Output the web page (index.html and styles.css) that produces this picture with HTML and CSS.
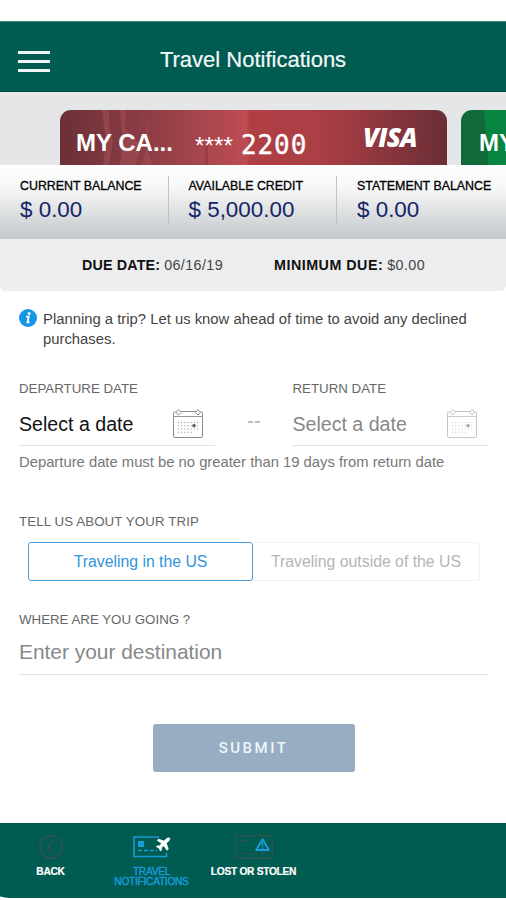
FILE: index.html
```html
<!DOCTYPE html>
<html lang="en">
<head>
<meta charset="utf-8">
<title>Travel Notifications</title>
<link rel="stylesheet" href="styles.css">
</head>
<body>
<div class="app">
  <header class="header">
    <div class="menu"><i></i><i></i><i></i></div>
    <h1 class="title">Travel Notifications</h1>
  </header>

  <section class="cards">
    <div class="card card-red">
      <svg class="card-art" viewBox="0 0 387 54" preserveAspectRatio="none">
        <path d="M42 0H49V14L53 31L49 54H43L46 32Z M60 0H66L65 18L81 35L75 54H60L63 31Z M87 14H88V40L92 54H82L86 40Z" fill="#b65c64" opacity=".35"/>
        <path d="M145 54V37L148 35V54Z" fill="#86353d" opacity=".5"/>
      </svg>
      <span class="card-name">MY CA...</span>
      <span class="card-mask">****</span>
      <span class="card-num">2200</span>
      <span class="card-brand">VISA</span>
    </div>
    <div class="card card-green"><span class="card-name">MY</span></div>
  </section>

  <section class="balances">
    <div class="balance"><span class="balance-label">CURRENT BALANCE</span><span class="amount">$ 0.00</span></div>
    <div class="balance"><span class="balance-label">AVAILABLE CREDIT</span><span class="amount">$ 5,000.00</span></div>
    <div class="balance"><span class="balance-label">STATEMENT BALANCE</span><span class="amount">$ 0.00</span></div>
  </section>

  <section class="due">
    <div class="due-item"><b>DUE DATE:</b> <span>06/16/19</span></div>
    <div class="due-item minimum"><b>MINIMUM DUE:</b> <span>$0.00</span></div>
  </section>

  <main class="form">
    <div class="info">
      <svg class="info-icon" viewBox="0 0 18 18"><circle cx="9" cy="9" r="9" fill="#1595e6"/><circle cx="10.1" cy="4.6" r="1.5" fill="#fff"/><path d="M7 7.6H9.700L8.500 13.200H10.500" fill="none" stroke="#fff" stroke-width="1.9"/></svg>
      <p>Planning a trip? Let us know ahead of time to avoid any declined<br>purchases.</p>
    </div>

    <div class="dates">
      <div class="date">
        <label class="label">DEPARTURE DATE</label>
        <div class="date-row">
          <span>Select a date</span>
          <svg class="calendar" viewBox="0 0 32 32" fill="none" stroke="#8d8d8d"><path d="M4.500 4H2.500Q1.500 4 1.500 5.500V28Q1.500 29.500 3 29.500H29Q30.500 29.500 30.500 28V5.500Q30.500 4 29.500 4H28M9 3.500H24"/><path d="M1.500 8.500H30.500" stroke-width=".9"/><path d="M4 4.500L6.700 1.500L9 4.500L6.700 7ZM23.500 4.500L26 1.500L28.500 4.500L26 7Z"/><path d="M6 14.500H28M6 17.700H28M6 21H28M6 24.300H20" stroke-dasharray="1 2.200" stroke-width="1"/><path d="M20.500 17.700H23.500" stroke="#555" stroke-width="3"/></svg>
        </div>
      </div>
      <span class="dash"><i></i><i></i></span>
      <div class="date muted">
        <label class="label">RETURN DATE</label>
        <div class="date-row">
          <span>Select a date</span>
          <svg class="calendar" viewBox="0 0 32 32" fill="none" stroke="#c5c5c5"><path d="M4.500 4H2.500Q1.500 4 1.500 5.500V28Q1.500 29.500 3 29.500H29Q30.500 29.500 30.500 28V5.500Q30.500 4 29.500 4H28M9 3.500H24"/><path d="M1.500 8.500H30.500" stroke-width=".9"/><path d="M4 4.500L6.700 1.500L9 4.500L6.700 7ZM23.500 4.500L26 1.500L28.500 4.500L26 7Z"/><path d="M6 14.500H28M6 17.700H28M6 21H28M6 24.300H20" stroke-dasharray="1 2.200" stroke-width="1"/><path d="M20.500 17.700H23.500" stroke="#a5a5a5" stroke-width="3"/></svg>
        </div>
      </div>
    </div>
    <p class="hint">Departure date must be no greater than 19 days from return date</p>

    <label class="label trip-label">TELL US ABOUT YOUR TRIP</label>
    <div class="segments">
      <div class="segment active">Traveling in the US</div>
      <div class="segment">Traveling outside of the US</div>
    </div>

    <label class="label where-label">WHERE ARE YOU GOING ?</label>
    <div class="destination">Enter your destination</div>

    <button class="submit">SUBMIT</button>
  </main>

  <nav class="tabs">
    <div class="tab back">
      <svg width="24" height="24" viewBox="0 0 24 24" fill="none" stroke="#3c4f4c" stroke-width="1.300"><circle cx="12" cy="12" r="11.300"/><path d="M14 6.500L9 12L14 17.500"/></svg>
      <span>BACK</span>
    </div>
    <div class="tab travel">
      <svg width="38" height="24" viewBox="0 0 38 24"><path d="M26 2H1V21.500H33.500V18" fill="none" stroke="#1b9bd7" stroke-width="1.600"/><path d="M5 6H11V12H5Z" fill="#1b9bd7"/><path d="M5 15.500H24" stroke="#1b9bd7" stroke-width="1.600" stroke-dasharray="4 2"/><path d="M36.800 3.200Q35.200 2 33.300 3.800L31 6L25.500 4L24.300 5.400L28.600 8.500L26.200 11L24.200 10.700L23.300 11.800L26 13.200L27.400 16L28.700 15L28.400 13L30.800 10.700L34 15.400L35.300 14L33.400 8.300L35.700 6Q37.500 4.300 36.800 3.200Z" fill="#fff" stroke="#fff" stroke-width=".6"/></svg>
      <span>TRAVEL<br>NOTIFICATIONS</span>
    </div>
    <div class="tab lost">
      <svg width="38" height="24" viewBox="0 0 38 24" fill="none" stroke="#3c4f4c" stroke-width="1.200"><rect x=".7" y=".7" width="36.500" height="22.500" rx="2"/><path d="M4 5.500H14M4 10H8M4 18.500H32" stroke-dasharray="5 2"/><path d="M27.500 4.200L33.800 15H21.200Z" stroke="#1b9bd7" stroke-width="2" stroke-linejoin="round"/><path d="M27.500 7.500V11.500M27.500 12.300V14" stroke="#1b9bd7" stroke-width="1.500"/></svg>
      <span>LOST OR STOLEN</span>
    </div>
  </nav>
</div>
</body>
</html>
```
FILE: styles.css
```css
* { box-sizing: border-box; }
body { margin: 0; background: #fff; font-family: "Liberation Sans", Arial, sans-serif; color: #000; }
h1, p { margin: 0; font-weight: 400; }
.app { display: flex; flex-direction: column; width: 506px; height: 900px; padding-top: 21px; overflow: hidden; white-space: nowrap; }

.header { display: grid; grid-template-columns: 50px 1fr 50px; height: 71px; flex: none; padding-top: 5px; align-items: center; background: #005b50; border-top: 1px solid #3d8f83; border-bottom: 1px solid #004b40; }
.menu { display: flex; flex-direction: column; gap: 6px; padding: 5px 0 0 18px; }
.menu i { height: 3px; background: #f0f4f3; }
.title { padding-top: 2px; font-size: 22px; line-height: 26px; text-align: center; color: #f4f8f7; -webkit-text-stroke: .2px #f4f8f7; }

.cards { display: flex; flex: none; gap: 14px; height: 73px; padding: 18px 0 0 60px; background: #e5e6e8; overflow: hidden; }
.card { position: relative; flex: none; display: flex; height: 55px; padding-left: 16px; border-radius: 11px 11px 0 0; color: #fff; }
.card-red { width: 387px; background: linear-gradient(90deg, #6c3036, #8d3d45 22%, #bd4c53 48%, #b03e45 49%, #ab3e45 68%, #6b2e35); }
.card-green { width: 200px; padding-left: 18px; background: linear-gradient(85deg, #12693a 0 27px, #068440 28px); }
.card-art { position: absolute; inset: 0; width: 100%; height: 100%; }
.card span { position: relative; line-height: 28px; }
.card-name { width: 119px; padding-top: 19px; font-size: 24px; font-weight: 700; }
.card-green .card-name { width: auto; }
.card-mask { width: 46px; padding-top: 22px; font-size: 24px; letter-spacing: .2px; }
.card-num { width: 122px; padding-top: 21px; font-family: "DejaVu Sans Mono", monospace; font-size: 26px; letter-spacing: .9px; -webkit-text-stroke: .4px #fff; }
.card-brand { padding-top: 13px; font-family: "Open Sans", sans-serif; font-size: 26px; font-weight: 800; font-style: italic; letter-spacing: -.8px; }

.balances { display: flex; flex: none; height: 74px; padding-top: 11px; background: linear-gradient(#fff, #f5f6f7 32%, #c4c8ca); }
.balance { display: flex; flex-direction: column; width: 168.500px; height: 49px; padding-left: 20px; border-right: 1px solid #bfc3c6; }
.balance:last-child { border: 0; }
.balance-label { height: 21px; font-size: 12.400px; line-height: 21px; -webkit-text-stroke: .3px #000; }
.amount { font-size: 22.400px; line-height: 26px; color: #132566; }

.due { display: flex; flex: none; height: 52px; padding-left: 82px; background: #ecedef; font-size: 14.300px; line-height: 52px; border-radius: 0 0 6px 6px; }
.due-item { width: 192px; }
.due-item b { letter-spacing: .15px; color: #111; }
.due-item span { letter-spacing: .4px; color: #444; }
.due-item.minimum b { letter-spacing: .5px; }

.form { display: flex; flex: 1; flex-direction: column; padding: 18px 18px 0 19px; color: #777; }
.info { display: flex; height: 70.500px; font-size: 14.830px; line-height: 20px; color: #444; }
.info-icon { width: 18px; height: 18px; margin-right: 6px; }
.label { display: block; height: 18px; font-size: 13.300px; line-height: 18px; color: #666; }
.dates { display: flex; height: 66.500px; }
.date { width: 196px; border-bottom: 1px solid #e2e2e2; }
.date-row { display: flex; justify-content: space-between; align-items: center; height: 47px; padding: 6px 11px 0 0; font-size: 19.600px; color: #111; }
.muted .date-row { padding-right: 10px; color: #888; }
.calendar { width: 32px; height: 32px; margin-top: -1px; }
.dash { display: flex; gap: 2px; width: 78px; padding: 41.500px 0 0 33px; }
.dash i { width: 5px; height: 2px; background: #bbb; }
.hint { padding-top: 6px; font-size: 14.800px; line-height: 20px; }
.trip-label { margin-top: 41px; letter-spacing: .1px; }
.segments { display: flex; height: 39px; margin: 11px 8px 0 9px; font-size: 15.800px; line-height: 37px; text-align: center; }
.segment { flex: 1; border: 1px solid #f2f2f2; border-left: 0; border-radius: 0 3px 3px 0; color: #b5b5b5; }
.segment.active { flex: none; width: 225px; border: 1px solid #4b9fdb; border-radius: 3px; color: #3295da; }
.where-label { margin-top: 30px; }
.destination { height: 46px; border-bottom: 1px solid #e2e2e2; font-size: 20.900px; line-height: 45px; color: #888; }
.submit { align-self: center; width: 202px; height: 48px; margin-top: 49px; padding: 0; border: 0; border-radius: 3px; background: #98adc2; font: 500 15px/48px Roboto, sans-serif; letter-spacing: 2.500px; color: #edf6fd; }

.tabs { display: flex; flex: none; height: 75px; margin-bottom: 2px; background: #005b50; border-bottom-left-radius: 16px 2px; color: #fff; }
.tab { display: flex; flex-direction: column; align-items: center; width: 101px; padding-top: 12px; font-size: 10.200px; font-weight: 700; line-height: 10px; letter-spacing: -.28px; text-align: center; -webkit-text-stroke: .2px #fff; }
.tab.lost { width: 103px; }
.tab svg { margin-bottom: 8px; }
.travel svg { margin-left: 1px; }
.tab.travel { color: #1b9bd7; font-weight: 400; -webkit-text-stroke: .4px #1b9bd7; }
```
